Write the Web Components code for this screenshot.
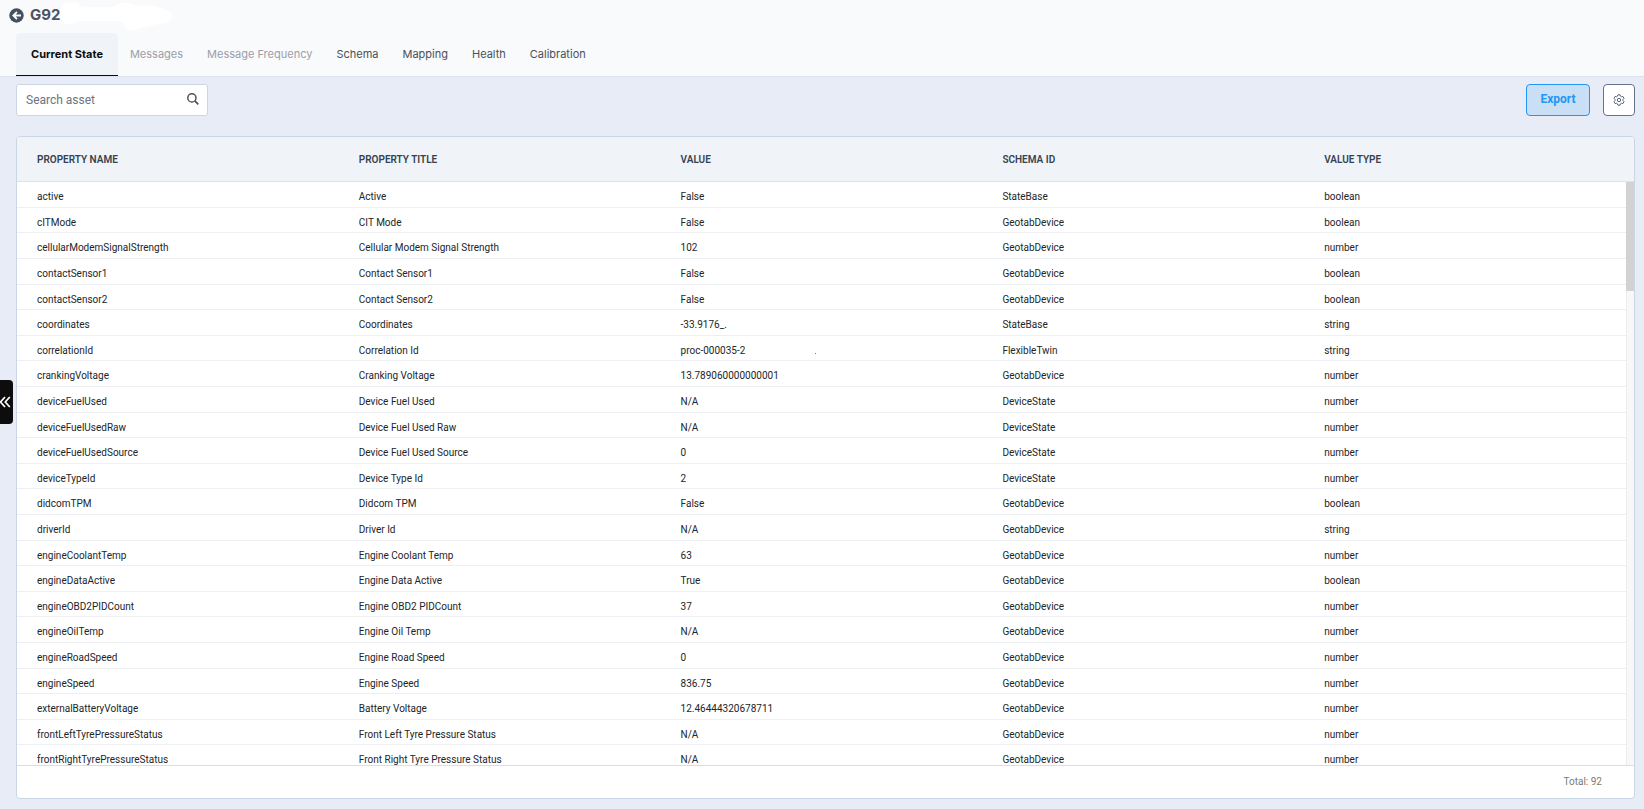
<!DOCTYPE html>
<html lang="en">
<head>
<meta charset="utf-8">
<title>Asset G92</title>
<style>
  body { margin: 0; background: #e8ecf6; font-family: Roboto, "Liberation Sans", sans-serif; color: #212529; }
</style>
</head>
<body>
<asset-page></asset-page>
<script>
const define = (name, html, setup) => customElements.define(name, class extends HTMLElement {
  connectedCallback() {
    if (this.shadowRoot) return;
    const root = this.attachShadow({ mode: 'open' });
    const t = document.createElement('template');
    t.innerHTML = html;
    root.append(t.content.cloneNode(true));
    if (setup) setup(this, root);
  }
});

define('asset-title', `
<style>
  :host { display: flex; align-items: center; gap: 6px; height: 30px; padding-left: 9px; color: #4a5464; position: relative; }
  a { display: flex; color: inherit; position: relative; }
  h1 { margin: 0; font-size: 15px; line-height: 20px; font-weight: 700; font-family: Inter, sans-serif; position: relative; }
  .smudge { position: absolute; left: 60px; top: 0; }
</style>
<svg class="smudge" width="113" height="32" viewBox="0 0 113 32" fill="#fff" aria-hidden="true"><path d="M0 13C0 5 4 2 10 2h6c3 0 4 5 8 5h30c2-3 6-4 12-4s8 2 12 3c5-1 14-1 20 1 8 2 14 5 14 9 0 7-8 8-14 8-8 2-14 3-20 5-8 3-13 0-14-3 0-3-2-5-6-5H18c-2 2-4 3-9 3-6 0-9-5-9-11z"/></svg>
<a href="#assets" aria-label="Back to assets"><svg width="15" height="15" viewBox="0 0 15 15"><circle cx="7.500" cy="7.500" r="7.200" fill="#465062"/><path d="M3 7.500 7.300 3.300 8.600 4.600 6.800 6.500H12v2H6.800L8.600 10.400 7.300 11.700Z" fill="#fff"/></svg></a>
<h1><slot></slot></h1>`);

define('tab-link', `
<style>
  :host { display: block; }
  a { display: block; box-sizing: border-box; height: 43px; padding: 0 12px; line-height: 42px; font-size: 11px; font-family: Inter, sans-serif; color: #4a5059; text-decoration: none; }
  :host([muted]) a { color: #9aa0a9; }
  :host([current]) a { padding: 0 15px; font-weight: 700; color: #0b0d10; background: #f0f4f9; border-bottom: 1px solid #0b0d10; border-radius: 4px 4px 0 0; }
</style>
<a href="#tab"><slot></slot></a>`, (el, root) => {
  if (el.hasAttribute('current')) root.querySelector('a').setAttribute('aria-current', 'page');
});

define('tab-bar', `
<style>
  :host { display: block; border-bottom: 1px solid #dbe2ed; padding: 3px 16px 0; }
  nav { display: flex; }
</style>
<nav><slot></slot></nav>`);

define('search-box', `
<style>
  :host { display: flex; align-items: center; box-sizing: border-box; width: 192px; height: 32px; background: #fff; border: 1px solid #cbd6e4; border-radius: 3px; padding: 0 8px 0 9px; }
  input { flex: 1; min-width: 0; border: 0; outline: 0; padding: 0; background: none; font: 12px/16px Roboto, sans-serif; color: #333; }
  input::placeholder { color: #6b7480; opacity: 1; }
  button { border: 0; background: none; padding: 0 0 3px; display: flex; color: #4a5360; }
</style>
<input type="text" placeholder="Search asset" aria-label="Search asset">
<button type="button" aria-label="Search"><svg width="12" height="12" viewBox="0 0 12 12" fill="none" stroke="currentColor"><circle cx="4.900" cy="4.900" r="4.100" stroke-width="1.500"/><path d="M7.900 7.900 11.300 11.300" stroke-width="1.700"/></svg></button>`);

define('tool-button', `
<style>
  :host { display: block; }
  button { box-sizing: border-box; height: 32px; width: 32px; padding: 0; display: flex; align-items: center; justify-content: center; background: #fff; border: 1px solid #66718c; border-radius: 4px; color: #56637a; font: 700 12px/16px Roboto, sans-serif; }
  :host([primary]) button { width: 64px; padding-bottom: 3px; background: #c9dff6; border-color: #2196f3; color: #2196f3; }
</style>
<button type="button"><slot></slot></button>`, (el, root) => {
  if (el.title) root.querySelector('button').setAttribute('aria-label', el.title);
});

define('side-toggle', `
<style>
  :host { position: fixed; left: 0; top: calc(50% - 25px); }
  button { width: 13px; height: 44px; padding: 0; border: 0; background: #0d0d0d; border-radius: 0 4px 4px 0; display: flex; align-items: center; }
</style>
<button type="button" aria-label="Open side panel"><svg width="11" height="12" viewBox="0 0 11 12" fill="none" stroke="#fff" stroke-width="1.700"><path d="M5 1 .5 6 5 11M9.800 1 5.300 6 9.800 11"/></svg></button>`);

const rows = `active|Active|False|StateBase|boolean
cITMode|CIT Mode|False|GeotabDevice|boolean
cellularModemSignalStrength|Cellular Modem Signal Strength|102|GeotabDevice|number
contactSensor1|Contact Sensor1|False|GeotabDevice|boolean
contactSensor2|Contact Sensor2|False|GeotabDevice|boolean
coordinates|Coordinates|-33.9176_.|StateBase|string
correlationId|Correlation Id|proc-000035-2|FlexibleTwin|string
crankingVoltage|Cranking Voltage|13.789060000000001|GeotabDevice|number
deviceFuelUsed|Device Fuel Used|N/A|DeviceState|number
deviceFuelUsedRaw|Device Fuel Used Raw|N/A|DeviceState|number
deviceFuelUsedSource|Device Fuel Used Source|0|DeviceState|number
deviceTypeId|Device Type Id|2|DeviceState|number
didcomTPM|Didcom TPM|False|GeotabDevice|boolean
driverId|Driver Id|N/A|GeotabDevice|string
engineCoolantTemp|Engine Coolant Temp|63|GeotabDevice|number
engineDataActive|Engine Data Active|True|GeotabDevice|boolean
engineOBD2PIDCount|Engine OBD2 PIDCount|37|GeotabDevice|number
engineOilTemp|Engine Oil Temp|N/A|GeotabDevice|number
engineRoadSpeed|Engine Road Speed|0|GeotabDevice|number
engineSpeed|Engine Speed|836.75|GeotabDevice|number
externalBatteryVoltage|Battery Voltage|12.46444320678711|GeotabDevice|number
frontLeftTyrePressureStatus|Front Left Tyre Pressure Status|N/A|GeotabDevice|number
frontRightTyrePressureStatus|Front Right Tyre Pressure Status|N/A|GeotabDevice|number`.split('\n').map(r => r.split('|'));

define('property-table', `
<style>
  :host { display: flex; flex-direction: column; min-height: 0; background: #fff; border: 1px solid #cbd6e4; border-radius: 4px; overflow: hidden; }
  .view { flex: 1; min-height: 0; display: grid; grid-template: 45px minmax(0, 1fr) / minmax(0, 1fr) 8px; }
  table { grid-area: 1 / 1 / 3 / 2; display: flex; flex-direction: column; min-height: 0; }
  thead { display: block; flex: none; background: #f0f4f9; border-bottom: 1px solid #dde2e8; height: 44px; }
  tbody { display: block; flex: 1; min-height: 0; overflow-y: auto; scrollbar-width: none; }
  tr { display: grid; grid-template-columns: repeat(5, minmax(0, 1fr)); box-sizing: border-box; }
  th, td { padding: 0 20px; text-align: left; white-space: nowrap; }
  th { font-size: 10px; font-weight: 600; line-height: 44px; padding-top: 1px; height: 43px; color: #36424f; }
  td { font-size: 10px; line-height: 25px; padding-top: 2px; height: 23px; }
  tbody tr { height: 26px; border-bottom: 1px solid #eeeff2; }
  tbody tr:nth-child(5n+2), tbody tr:nth-child(5n) { height: 25px; }
  .corner { grid-area: 1 / 2; background: #f0f4f9; border-bottom: 1px solid #dde2e8; }
  .track { grid-area: 2 / 2; background: #f8f8f8; border-left: 1px solid #ebebeb; }
  .thumb { height: 109px; background: #d2d2d2; margin-left: -1px; }
  .trace { display: inline-block; width: 1px; height: 1px; margin-left: 70px; background: #c4603c; }
  footer { flex: none; height: 32px; line-height: 32px; border-top: 1px solid #dadde1; padding-right: 32px; text-align: right; font-size: 10px; color: #7a7a7a; }
</style>
<div class="view">
  <table>
    <thead><tr><th>PROPERTY NAME</th><th>PROPERTY TITLE</th><th>VALUE</th><th>SCHEMA ID</th><th>VALUE TYPE</th></tr></thead>
    <tbody></tbody>
  </table>
  <div class="corner"></div>
  <div class="track"><div class="thumb"></div></div>
</div>
<footer><slot></slot></footer>`, (el, root) => {
  const body = root.querySelector('tbody');
  for (const r of rows) {
    const tr = body.insertRow();
    for (const v of r) tr.insertCell().textContent = v;
    if (r[0] === 'correlationId') {
      const dot = document.createElement('span');
      dot.className = 'trace';
      tr.cells[2].append(dot);
    }
  }
});

define('asset-page', `
<style>
  :host { display: flex; flex-direction: column; height: 100vh; }
  header { flex: none; background: #f9fafc; }
  .tools { flex: none; display: flex; align-items: center; gap: 13px; padding: 7px 9px 20px 16px; }
  search-box { margin-right: auto; }
  property-table { flex: 1; margin: 0 9px 10px 16px; }
</style>
<header>
  <asset-title>G92</asset-title>
  <tab-bar>
    <tab-link current>Current State</tab-link><tab-link muted>Messages</tab-link><tab-link muted>Message Frequency</tab-link><tab-link>Schema</tab-link><tab-link>Mapping</tab-link><tab-link>Health</tab-link><tab-link>Calibration</tab-link>
  </tab-bar>
</header>
<div class="tools">
  <search-box></search-box>
  <tool-button primary>Export</tool-button>
  <tool-button title="Settings"><svg width="12" height="12" viewBox="0 0 12 12" fill="none" stroke="currentColor"><path d="M4.900.8h2.200l.4 1.400 1 .6 1.400-.4 1.100 1.900-1 1v1.400l1 1-1.100 1.900-1.400-.4-1 .6-.4 1.400H4.900l-.4-1.400-1-.6-1.400.4L1 7.700l1-1V5.300l-1-1 1.100-1.900 1.400.4 1-.6z" stroke-linejoin="round"/><circle cx="6" cy="6" r="1.700"/></svg></tool-button>
</div>
<property-table>Total: 92</property-table>
<side-toggle></side-toggle>`);
</script>
</body>
</html>
